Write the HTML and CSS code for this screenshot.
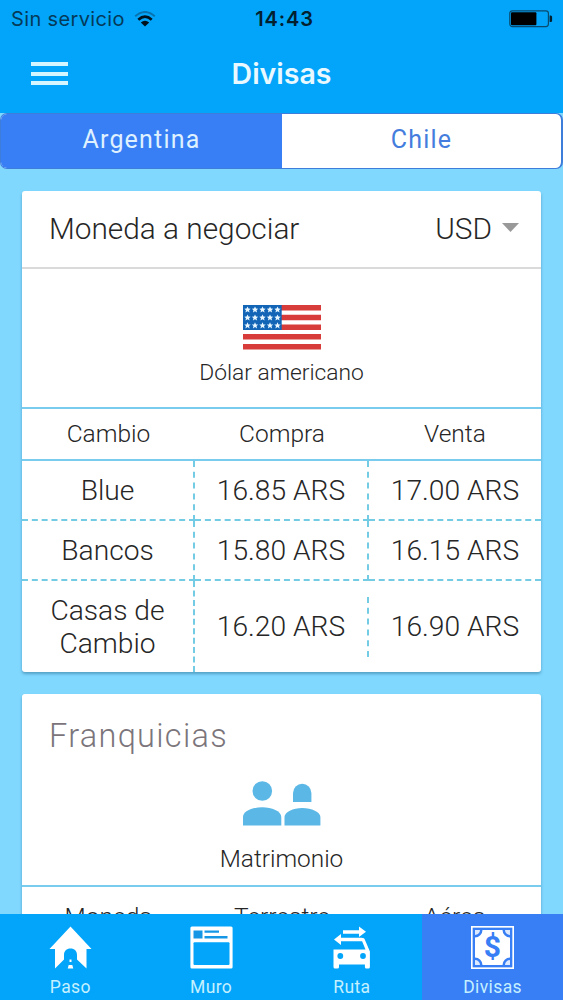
FILE: index.html
```html
<!DOCTYPE html>
<html lang="es">
  <head>
    <meta charset="utf-8">
    <meta name="viewport" content="width=device-width, initial-scale=1.0">
    <title>Divisas</title>
    <link rel="stylesheet" href="styles.css">
  </head>

  <body>
    <div class="app">
      <div class="status-bar">
        <div class="carrier">
          <span>Sin servicio</span>
          <svg class="wifi" width="22" height="16" viewBox="0 0 22 16">
            <path d="M1.2 5.2Q11-3.2 20.8 5.2" fill="none" stroke="#0873ae" stroke-width="2"/>
            <path d="M4.3 8.7Q11 2.6 17.7 8.7" fill="none" stroke="#02121c" stroke-width="2.7"/>
            <path d="M11 15.6L6.8 11.5Q11 8 15.2 11.5Z" fill="#02121c"/>
          </svg>
        </div>
        <span class="time">14:43</span>
        <svg class="battery" width="44" height="18" viewBox="0 0 44 18">
          <rect x=".8" y=".8" width="38.6" height="15.8" rx="2.5" fill="none" stroke="#0a4a6c" stroke-width="1.2"/>
          <rect x="2" y="2.2" width="25.4" height="13" rx="1" fill="#000"/>
          <path d="M40.6 5.5h1a1.5 1.5 0 0 1 1.5 1.5v3.5a1.5 1.5 0 0 1-1.5 1.5h-1z" fill="#02202f"/>
        </svg>
      </div>

      <header>
        <button class="menu-btn" aria-label="Menu"><i></i><i></i><i></i></button>
        <h1>Divisas</h1>
      </header>

      <div class="segment">
        <a class="segment-btn active">Argentina</a>
        <a class="segment-btn">Chile</a>
      </div>

      <main>
        <section class="card">
          <div class="select-row">
            <span>Moneda a negociar</span>
            <span class="select">USD<i class="caret"></i></span>
          </div>
          <div class="hero currency">
            <svg width="78" height="45" viewBox="0 0 78 45">
              <defs>
                <path id="star" d="M0-3.2L1-1 3.2-.9 1.5.7 2.1 3 0 1.7-2.1 3-1.5.7-3.2-.9-1-1Z" fill="#e8f7ff"/>
                <g id="stars">
                  <use href="#star" x="4.5"/><use href="#star" x="12"/><use href="#star" x="19.5"/><use href="#star" x="27"/><use href="#star" x="34.5"/>
                </g>
              </defs>
              <path d="M0 0h78v5.5H0zM0 9.7h78v5.5H0zM0 19.4h78v5.5H0zM0 29.1h78v5.5H0zM0 38.9h78v5.5H0z" fill="#d73c3b"/>
              <path d="M0 0h38.7v24.9H0z" fill="#1164b6"/>
              <use href="#stars" y="4.6"/>
              <use href="#stars" y="12.6"/>
              <use href="#stars" y="20.4"/>
            </svg>
            <p>Dólar americano</p>
          </div>
          <div class="row head">
            <div class="cell">Cambio</div>
            <div class="cell">Compra</div>
            <div class="cell">Venta</div>
          </div>
          <div class="row">
            <div class="cell">Blue</div>
            <div class="cell">16.85 ARS</div>
            <div class="cell">17.00 ARS</div>
          </div>
          <div class="row">
            <div class="cell">Bancos</div>
            <div class="cell">15.80 ARS</div>
            <div class="cell">16.15 ARS</div>
          </div>
          <div class="row last">
            <div class="cell">Casas de Cambio</div>
            <div class="cell">16.20 ARS</div>
            <div class="cell">16.90 ARS</div>
          </div>
        </section>

        <section class="card">
          <h2>Franquicias</h2>
          <div class="hero people">
            <svg width="78" height="45" viewBox="0 0 78 45" fill="#5ab7e6">
              <circle cx="19.3" cy="10" r="9.8"/>
              <path d="M0 44.5V36C0 30 10 26.2 19.3 26.2S38.3 30 38.3 36v8.5z"/>
              <path d="M50 21v-9a9.2 9.2 0 0 1 18.4 0v9z"/>
              <path d="M41.5 44.5V36C41.5 31 50 27 59.3 27S77.4 31 77.4 36v8.5z"/>
            </svg>
            <p>Matrimonio</p>
          </div>
          <div class="row head tall">
            <div class="cell">Moneda</div>
            <div class="cell">Terrestre</div>
            <div class="cell">Aérea</div>
          </div>
        </section>
      </main>

      <nav>
        <a class="tab">
          <svg width="43" height="43" viewBox="0 0 43 43">
            <path d="M21.5.5L42.500 23H37.500V42.500L28 33.500V29c0-4-2.500-6.500-6.500-6.500S15 25 15 29v4.500L6 42.500V23H.5z" fill="#fff"/>
            <path d="M19.7 39h3.600l1 3.500h-5.600zM20.500 33.500h2v2.500h-2z" fill="#fff"/>
          </svg>
          <span>Paso</span>
        </a>
        <a class="tab">
          <svg width="43" height="43" viewBox="0 0 43 43">
            <rect x=".4" y=".4" width="42.2" height="42.2" rx="1.5" fill="#fff"/>
            <path d="M3.5 4.5h9v8h-9zM14.5 4.5H29v2.2H14.5zM14.5 10h23v2.6h-23z" fill="#1597e6"/>
            <rect x="3.5" y="16.2" width="36" height="22.8" rx="1" fill="#02a5fa"/>
          </svg>
          <span>Muro</span>
        </a>
        <a class="tab">
          <svg width="43" height="43" viewBox="0 0 43 43">
            <path d="M13 4.2h16V.5l7 5.3-7 5.3V7.7H13z" fill="#fff"/>
            <path d="M4 13.500L11 8v3.700H31.500c2 0 3 .7 3.600 2.500l4.800 11.300V41a1.500 1.500 0 0 1-1.500 1.500h-2A1.500 1.500 0 0 1 34.900 41v-2.500H9V41A1.500 1.500 0 0 1 7.500 42.500H5A1.500 1.500 0 0 1 3.500 41V23.500h32l-3.400-8.200H11V19z" fill="#fff"/>
            <circle cx="10.3" cy="30" r="2.9" fill="#02a5fa"/>
            <circle cx="33" cy="30" r="2.9" fill="#02a5fa"/>
          </svg>
          <span>Ruta</span>
        </a>
        <a class="tab active">
          <svg width="43" height="43" viewBox="0 0 43 43">
            <rect x=".8" y=".8" width="41.4" height="41.4" fill="none" stroke="#fff" stroke-width="1.7"/>
            <path d="M11.5 4h20a7.5 7.5 0 0 0 7.5 7.5v20a7.5 7.5 0 0 0-7.5 7.5h-20A7.5 7.5 0 0 0 4 31.5v-20A7.5 7.5 0 0 0 11.5 4z" fill="#fff"/>
            <path d="M4 4h5a5 5 0 0 1-5 5zM39 4v5a5 5 0 0 1-5-5zM4 39v-5a5 5 0 0 1 5 5zM39 39h-5a5 5 0 0 1 5-5z" fill="#dce9ff"/>
            <text class="dollar" x="21.3" y="31" text-anchor="middle">$</text>
          </svg>
          <span>Divisas</span>
        </a>
      </nav>
    </div>
  </body>
</html>
```
FILE: styles.css
```css
* {
margin: 0;
padding: 0;
box-sizing: border-box;
}

body {
font-family: Roboto, "Liberation Sans", sans-serif;
font-weight: 300;
color: #262626;
background: #80d8ff;
}

.app {
display: flex;
flex-direction: column;
height: 1000px;
overflow: hidden;
}

.status-bar {
display: grid;
grid-template-columns: 1fr auto 1fr;
align-items: center;
height: 37px;
padding: 0 10px 0 14px;
background: #02a5fa;
color: #053a59;
font: 400 20px Inter, sans-serif;
flex-shrink: 0;
}

.carrier {
display: flex;
align-items: center;
gap: 9px;
margin-left: -3px;
letter-spacing: 0.35px;
}

.time {
color: #03202f;
font-weight: 600;
letter-spacing: 0.9px;
margin-left: 2px;
}

.battery {
justify-self: end;
}

header {
display: grid;
grid-template-columns: 1fr auto 1fr;
align-items: center;
height: 76px;
padding: 0 31px 3px;
background: #02a5fa;
color: #e9f9ff;
flex-shrink: 0;
}

header h1 {
font: 600 28.5px Inter, sans-serif;
}

.menu-btn {
display: flex;
flex-direction: column;
justify-content: space-between;
width: 37px;
height: 23px;
border: 0;
background: none;
}

.menu-btn i {
height: 4px;
width: 100%;
background: #d5f6ff;
}

.segment {
display: flex;
height: 56px;
border: 2px solid #3f7ddb;
border-width: 1px 2px 1px 1px;
border-radius: 7px;
background: #fff;
overflow: hidden;
flex-shrink: 0;
}

.segment-btn {
display: flex;
flex: 1;
align-items: center;
justify-content: center;
padding-bottom: 3px;
color: #447ddd;
font-size: 25px;
font-weight: 400;
letter-spacing: 1.2px;
}

.segment-btn.active {
flex: 0 0 281px;
background: #387ef5;
color: #dff1ff;
}

main {
flex: 1;
min-height: 0;
padding: 22px 22px 0;
overflow: hidden;
}

.card {
width: 519px;
margin-bottom: 22px;
border-radius: 3px;
background: #fff;
box-shadow: 0 2px 3px rgba(0,60,90,0.35);
}

.select-row {
display: flex;
align-items: center;
justify-content: space-between;
height: 78px;
padding: 0 22px 2px 27px;
border-bottom: 2px solid #dadada;
font-size: 29.8px;
}

.select {
display: flex;
align-items: center;
gap: 10px;
}

.caret {
width: 17px;
height: 9px;
margin-top: -1px;
background: #999;
clip-path: polygon(0 0, 100% 0, 50% 100%);
}

.hero {
display: flex;
flex-direction: column;
align-items: center;
font-size: 22.8px;
}

.hero p {
line-height: 28px;
margin-top: 9px;
}

.currency {
height: 138px;
padding-top: 36px;
}

.people {
height: 108px;
padding-top: 4px;
}

.people p {
margin-top: 19px;
font-size: 24.4px;
}

.card h2 {
height: 83px;
padding: 24px 27px 0;
color: #7b757b;
font-size: 32.5px;
font-weight: 300;
line-height: 36px;
letter-spacing: 1.3px;
}

.row {
display: flex;
align-items: center;
height: 60px;
font-size: 28.2px;
}

.cell {
display: flex;
align-items: center;
justify-content: center;
width: 173px;
height: 60px;
border-right: 2px dashed #74cbe4;
border-bottom: 2px dashed #74cbe4;
text-align: center;
line-height: 33px;
}

.cell:nth-child(2) {
width: 174px;
}

.cell:last-child {
width: 172px;
border-right: 0;
}

.row.head {
height: 54px;
border-top: 2px solid #7accee;
border-bottom: 2px solid #7accee;
font-size: 24.5px;
}

.row.head.tall {
height: 64px;
}

.head .cell {
height: 50px;
padding-bottom: 2px;
border: 0;
}

.row.last {
height: 91px;
}

.last .cell {
border-bottom: 0;
}

.last .cell:first-child {
height: 91px;
padding: 0 20px;
}

nav {
display: flex;
height: 86px;
background: #02a5fa;
flex-shrink: 0;
}

.tab {
display: flex;
flex: 1;
flex-direction: column;
align-items: center;
padding-top: 12px;
color: #c5f0ff;
font-size: 17.5px;
font-weight: 400;
line-height: 22px;
letter-spacing: 0.4px;
}

.tab span {
margin-top: 7px;
}

.tab.active {
background: #387ef5;
}

.dollar {
fill: #387ef5;
font: 700 30px Roboto, sans-serif;
letter-spacing: 0;
}
```
